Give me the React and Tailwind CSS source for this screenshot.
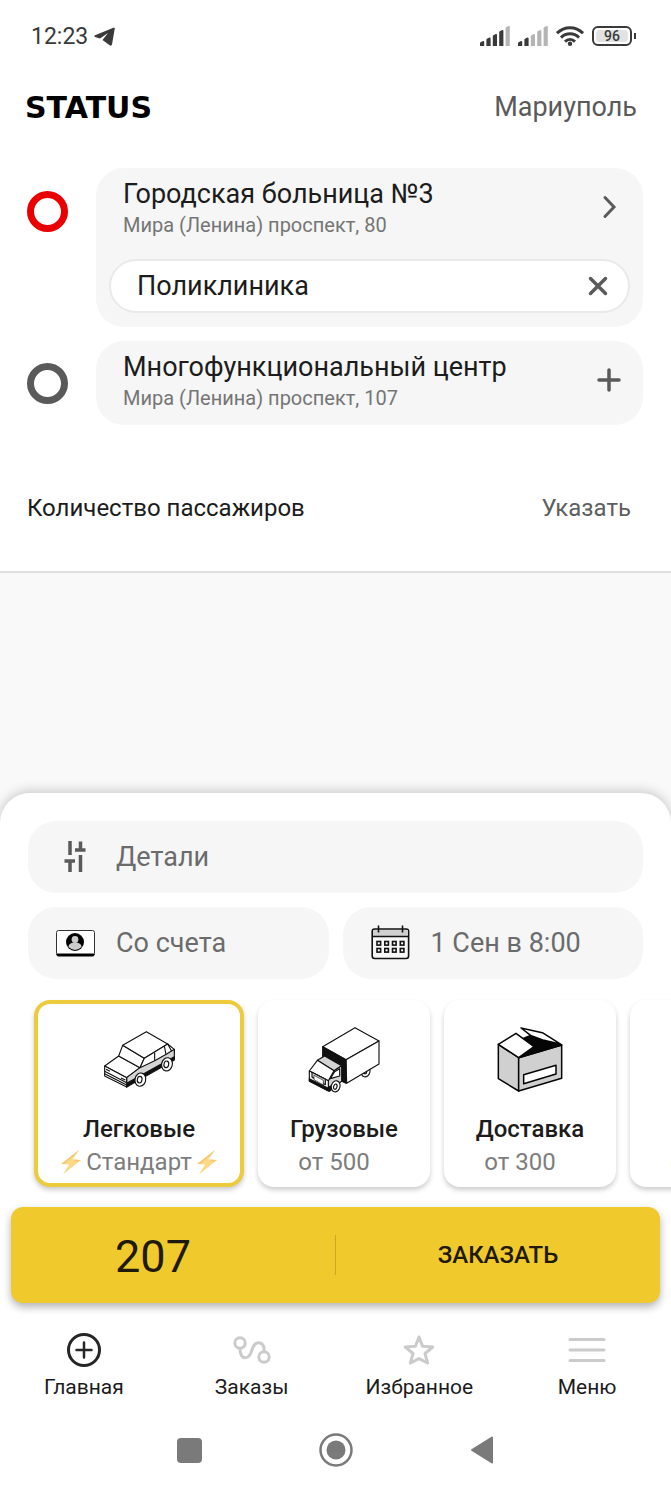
import React, { useState } from 'react';

const SignalIcon = ({ filled }) => (
    <svg width="30" height="20" viewBox="0 0 30 20">
        {[5, 8.5, 12, 16, 20].map((h, i) => (
            <path
                key={h}
                d={`M${i * 6.4} 20v-${h - 2}q0 -0.500 1 -1l2 -1q1.200 -0.300 1.200 1v${h - 1}z`}
                fill={i < filled ? '#3a3a3a' : '#b5b5b5'}
            />
        ))}
    </svg>
);

const WifiIcon = () => (
    <svg width="28" height="20" viewBox="0 0 28 20" fill="none" stroke="#3a3a3a" strokeWidth="3">
        <path d="M1 7.2C8.5 -0.2 19.5 -0.2 27 7.2" />
        <path d="M5 11.6c5.2 -5 12.8 -5 18 0" />
        <path d="M9 15.6c3 -2.8 7 -2.8 10 0" />
        <circle cx="14" cy="17.8" r="2.2" fill="#3a3a3a" stroke="none" />
    </svg>
);

const CarIcon = () => (
    <svg width="80" height="70" viewBox="237 105 240 210" stroke="#111" strokeWidth="3.4" strokeLinejoin="round">
        <path d="M254 228L296 198L360 233L320 263Z" fill="#fff" />
        <path d="M296 198L308 166L373 205L360 233Z" fill="#fff" />
        <path d="M308 166L379 125L443 162L373 205Z" fill="#fff" />
        <path d="M360 233L373 205L443 162L463 178V190L380 233Z" fill="#fff" />
        <path d="M320 263L360 233L404 212L440 192L463 178V208L350 268L320 291Z" fill="#d4d4d4" />
        <path d="M320 280L463 200V210L320 291Z" fill="#111" />
        <path d="M404 212V188M438 193L433 168M443 162L455 184" fill="none" />
        <path d="M254 228V258L320 291V263Z" fill="#fff" />
        <path d="M254 244L320 278M254 251L320 285M258 238l12 6M303 264l13 6" fill="none" />
        <ellipse cx="361" cy="269" rx="16" ry="20" transform="rotate(12 361 269)" fill="#fff" />
        <ellipse cx="359" cy="269" rx="7" ry="10" transform="rotate(12 359 269)" fill="#fff" />
        <ellipse cx="441" cy="223" rx="16" ry="20" transform="rotate(12 441 223)" fill="#fff" />
        <ellipse cx="439" cy="223" rx="7" ry="10" transform="rotate(12 439 223)" fill="#fff" />
    </svg>
);

const TruckIcon = () => (
    <svg width="80" height="70" viewBox="162 105 240 210" stroke="#111" strokeWidth="3.4" strokeLinejoin="round">
        <ellipse cx="347" cy="244" rx="13" ry="17" transform="rotate(15 347 244)" fill="#fff" />
        <ellipse cx="345" cy="244" rx="5" ry="8" fill="#fff" />
        <path d="M218 170L315 113L387 153L288 209Z" fill="#fff" />
        <path d="M288 209L387 153V222L290 280Z" fill="#fff" />
        <path d="M218 170L288 209V280L272 272V235L218 205Z" fill="#111" />
        <path d="M202 211L224 198L275 227L252 242Z" fill="#d4d4d4" />
        <path d="M252 242L275 227V274L235 302V272Z" fill="#d4d4d4" />
        <path d="M202 211L252 242L235 272L178 243Z" fill="#fff" />
        <path d="M178 243L235 272V302L178 272Z" fill="#fff" />
        <path d="M178 266L235 295V303L178 274Z" fill="#111" />
        <path d="M186 247V262L226 284V268Z" fill="#d4d4d4" />
        <path d="M192 256L220 271V285L192 269Z" fill="#fff" strokeWidth="2" />
        <path d="M241 266L254 245L269 236V258Z" fill="#fff" />
        <path d="M235 292L250 284V294L238 304Z" fill="#111" />
        <ellipse cx="257" cy="289" rx="13" ry="17" transform="rotate(15 257 289)" fill="#fff" />
        <ellipse cx="256" cy="290" rx="5" ry="8" transform="rotate(15 256 290)" fill="#fff" />
    </svg>
);

const BoxIcon = () => (
    <svg width="80" height="70" viewBox="150 105 240 210" stroke="#050505" strokeWidth="4.5" strokeLinejoin="round">
        <path d="M175 163L236 203V303L175 266Z" fill="#d0d0d0" />
        <path d="M236 203L365 165V265L236 303Z" fill="#d0d0d0" />
        <path d="M236 203L282 170L248 146L272 136L312 153L365 165Z" fill="#050505" />
        <path d="M175 163L228 130L282 170L236 203Z" fill="#fff" />
        <path d="M243 114L307 128L363 163L312 151L272 136Z" fill="#fff" />
        <path d="M251 254L348 226V252L251 281Z" fill="#fff" />
    </svg>
);

const BoltIcon = () => (
    <svg width="22" height="26" viewBox="0 0 22 26">
        <path d="M19 1L1 15L9 15.500L3 25.500L21 11L12.500 10.500Z" fill="#fbd986" />
        <path d="M19 1L1 15L5 14.500L16 5ZM12.500 10.500L21 11L17 13Z" fill="#f8c877" />
    </svg>
);

const categories = [
    { title: 'Легковые', note: 'Стандарт', icon: <CarIcon />, bolt: true },
    { title: 'Грузовые', note: 'от 500', icon: <TruckIcon /> },
    { title: 'Доставка', note: 'от 300', icon: <BoxIcon /> },
    { title: '', note: 'от 300', icon: null },
];

const tabs = [
    {
        label: 'Главная',
        icon: (
            <svg width="38" height="38" viewBox="0 0 38 38" fill="none" stroke="#262626">
                <circle cx="19" cy="19" r="15.500" strokeWidth="3" />
                <path d="M19 11.500v15M11.500 19h15" strokeWidth="2.500" strokeLinecap="round" />
            </svg>
        ),
    },
    {
        label: 'Заказы',
        icon: (
            <svg width="38" height="38" viewBox="0 0 38 38" fill="none" stroke="#cbcbcb" strokeWidth="3">
                <circle cx="7" cy="12" r="5.200" />
                <circle cx="31" cy="26" r="5.200" />
                <path d="M7 17.200c0 6 2 9.500 5.500 9.500c7.500 0 5 -15 13 -15c4 0 6 3.500 5.500 9" />
            </svg>
        ),
    },
    {
        label: 'Избранное',
        icon: (
            <svg width="38" height="38" viewBox="0 0 38 38" fill="none" stroke="#cbcbcb" strokeWidth="3" strokeLinejoin="round">
                <path d="M19 6L22.600 15.200L32.800 16L25 22.500L27.600 32L19 27.600L10.400 32L13 22.500L5.200 16L15.400 15.200Z" />
            </svg>
        ),
    },
    {
        label: 'Меню',
        icon: (
            <svg width="38" height="38" viewBox="0 0 38 38" fill="none" stroke="#cbcbcb" strokeWidth="3" strokeLinecap="round">
                <path d="M2 8.500h34M2 19h34M2 29.500h34" />
            </svg>
        ),
    },
];

const App = () => {
    const [entrance, setEntrance] = useState('Поликлиника');
    const [active, setActive] = useState(0);

    return (
        <div className="min-h-screen bg-white text-[#1c1c1c] font-['Roboto',sans-serif] flex flex-col overflow-x-hidden">
            {/* Phone status bar */}
            <div className="h-[72px] pl-[31px] pr-[35px] flex items-center justify-between text-[#3a3a3a]">
                <div className="flex items-center gap-1.5">
                    <span className="pt-0.5 text-[23px]">12:23</span>
                    <svg width="21" height="19" viewBox="0 0 21 19" fill="#3a3a3a">
                        <path d="M20 0.500L0.500 8.500Q0 9.500 1 10L6 11.500L14 6L8.500 13L16 18.500Q17.500 19 18 17.500L20.800 1.200Z" />
                    </svg>
                </div>
                <div className="flex items-center gap-2">
                    <SignalIcon filled={4} />
                    <SignalIcon filled={2} />
                    <WifiIcon />
                    <div className="flex items-center gap-0.5">
                        <span className="w-[40px] h-[20px] rounded-md border-2 border-[#3a3a3a] p-0.5 flex">
                            <span className="flex-1 rounded-sm bg-[#e2e2e2] text-[14px] leading-3 font-medium text-center">96</span>
                        </span>
                        <span className="w-0.5 h-1.5 bg-[#3a3a3a]"></span>
                    </div>
                </div>
            </div>

            <header className="h-[70px] pl-[25px] pr-[34px] flex items-center justify-between">
                <h1 className="font-['DejaVu_Sans',sans-serif] font-bold text-[30px] text-black">STATUS</h1>
                <button className="text-[27px] text-[#5a5a5a]">Мариуполь</button>
            </header>

            {/* Route */}
            <section className="pl-[27px] pr-7 pt-[26px] flex flex-col gap-3.5">
                <div className="flex items-start gap-7">
                    <span className="w-[41px] h-[41px] mt-[23px] shrink-0 rounded-full border-[7px] border-[#ea0000]"></span>
                    <div className="flex-1 rounded-[28px] bg-[#f6f6f6] pt-2.5 pb-3.5">
                        <button className="w-full flex items-center justify-between pl-[27px] pr-5 text-left">
                            <span>
                                <span className="block text-[27px] leading-8">Городская больница №3</span>
                                <span className="block text-[20px] leading-[30px] text-[#757575]">Мира (Ленина) проспект, 80</span>
                            </span>
                            <svg className="mb-1" width="28" height="28" viewBox="0 0 28 28" fill="none" stroke="#5a5a5a" strokeWidth="3" strokeLinecap="round">
                                <path d="M10 4.500L19 14L10 23.500" />
                            </svg>
                        </button>
                        <div className="mt-[19px] mx-[13px] h-[54px] rounded-full bg-white border-2 border-[#e8eaea] flex items-center pl-[26px] pr-4">
                            <input
                                aria-label="Подъезд"
                                className="flex-1 min-w-0 text-[27px] outline-none"
                                value={entrance}
                                onChange={(e) => setEntrance(e.target.value)}
                            />
                            <button aria-label="Очистить" onClick={() => setEntrance('')}>
                                <svg width="28" height="28" viewBox="0 0 28 28" fill="none" stroke="#5a5a5a" strokeWidth="3.500" strokeLinecap="round">
                                    <path d="M6.500 6.500l15 15M21.500 6.500l-15 15" />
                                </svg>
                            </button>
                        </div>
                    </div>
                </div>

                <div className="flex items-center gap-7">
                    <span className="w-[41px] h-[41px] shrink-0 rounded-full border-[7px] border-[#5a5a5a]"></span>
                    <button className="flex-1 flex items-center justify-between rounded-[28px] bg-[#f6f6f6] pt-2.5 pb-3 pl-[27px] pr-5 text-left">
                        <span>
                            <span className="block text-[27px] leading-8">Многофункциональный центр</span>
                            <span className="block text-[20px] leading-[30px] text-[#757575]">Мира (Ленина) проспект, 107</span>
                        </span>
                        <svg className="mb-1" width="28" height="28" viewBox="0 0 28 28" fill="none" stroke="#5a5a5a" strokeWidth="3.500" strokeLinecap="round">
                            <path d="M14 4v20M4 14h20" />
                        </svg>
                    </button>
                </div>
            </section>

            <div className="mt-5 h-[128px] pl-[27px] pr-10 flex items-center justify-between text-[24px] border-b-2 border-[#e0e0e0]">
                <span>Количество пассажиров</span>
                <button className="text-[#5f5f5f]">Указать</button>
            </div>

            <main className="flex-1 bg-[#f9f9f9] pt-20 flex flex-col justify-end">
                <div className="rounded-t-[30px] bg-white pt-7 pb-3 shadow-[0_-2px_12px_rgba(0,0,0,0.2)]">
                    <div className="px-7 grid grid-cols-2 gap-3.5 text-[27px] text-[#6b6b6b]">
                        <button className="col-span-2 h-[72px] rounded-[28px] bg-[#f6f6f6] pl-7 flex items-center gap-5">
                            <svg width="40" height="40" viewBox="0 0 40 40" fill="none" stroke="#5a5a5a" strokeWidth="3.500">
                                <path d="M14 4v14M24.500 4.500v9M19 13h10.500M14 35V24M8.500 24h10.500M24.500 35V18" />
                            </svg>
                            Детали
                        </button>
                        <button className="h-[72px] rounded-[28px] bg-[#f6f6f6] pl-7 flex items-center gap-5">
                            <svg width="40" height="40" viewBox="0 0 40 40">
                                <rect x="0.500" y="7.500" width="38" height="25" rx="2" fill="#fff" stroke="#333" />
                                <path d="M1 31h37v1q0 1 -1.500 1h-34q-1.500 0 -1.500 -1z" fill="#000" stroke="#000" />
                                <circle cx="19" cy="19" r="9" fill="#000" />
                                <circle cx="19" cy="16.500" r="3.400" fill="#ccc" />
                                <path d="M12.500 24q0 -4.500 6.500 -4.500t6.500 4.500q-6.500 6 -13 0z" fill="#ccc" />
                            </svg>
                            Со счета
                        </button>
                        <button className="h-[72px] rounded-[28px] bg-[#f6f6f6] pl-7 flex items-center gap-5">
                            <svg width="40" height="40" viewBox="0 0 40 40" fill="none" stroke="#111" strokeWidth="1.600">
                                <rect x="1.200" y="6" width="36.400" height="29.500" rx="2.500" />
                                <path d="M2 7h35v6h-35z" fill="#d0d0d0" stroke="none" />
                                <path d="M1.200 13.500h36.400M7.500 2.500v7M31.500 2.500v7" />
                                {[18.500, 25.500].map((y) =>
                                    [6, 13.800, 21.500, 29.300].map((x) => (
                                        <rect key={`${x}-${y}`} x={x} y={y} width="3.600" height="3.600" fill="#fff" />
                                    ))
                                )}
                            </svg>
                            1 Сен в 8:00
                        </button>
                    </div>

                    {/* Car classes */}
                    <div className="mt-[7px] pt-3.5 pb-5 pl-[34px] flex gap-3.5 overflow-hidden">
                        {categories.map((item, i) => (
                            <button
                                key={i}
                                onClick={() => setActive(i)}
                                className={`shrink-0 h-[187px] pt-[21px] rounded-2xl border-4 bg-white shadow-[0_3px_5px_rgba(0,0,0,0.2)] flex flex-col items-center text-[24px] leading-8 ${
                                    i === active ? 'w-[210px] border-[#eccb3c]' : 'w-[172px] border-transparent'
                                }`}
                            >
                                <span className="h-[70px] mb-[18px]">{item.icon}</span>
                                <span className="h-[33px] font-medium">{item.title}</span>
                                {item.bolt ? (
                                    <span className="flex items-center gap-1 text-[#7d7d7d]">
                                        <BoltIcon />
                                        {item.note}
                                        <BoltIcon />
                                    </span>
                                ) : (
                                    <span className="pr-5 text-[#7d7d7d]">{item.note}</span>
                                )}
                            </button>
                        ))}
                    </div>

                    <div className="px-[11px]">
                        <button className="w-full h-24 rounded-xl bg-[#f0ca2d] flex items-center text-[#1f1a06] shadow-[0_4px_8px_rgba(0,0,0,0.3)]">
                            <span className="w-1/2 pr-10 pt-1 text-[45px]">207</span>
                            <span className="w-px h-10 bg-[#c9a823]"></span>
                            <span className="w-1/2 text-[24px] font-medium">ЗАКАЗАТЬ</span>
                        </button>
                    </div>
                </div>
            </main>

            <nav className="relative bg-white pt-4 pb-[7px] grid grid-cols-4">
                {tabs.map((tab) => (
                    <a key={tab.label} href="#" className="flex flex-col items-center gap-1 text-[21px] leading-7">
                        {tab.icon}
                        {tab.label}
                    </a>
                ))}
            </nav>

            {/* System buttons */}
            <div className="h-[84px] flex items-center justify-center">
                <button aria-label="Недавние" className="w-[146px] flex justify-center">
                    <span className="w-[25px] h-[25px] rounded-sm bg-[#7a7a7a]"></span>
                </button>
                <button aria-label="Домой" className="w-[146px] flex justify-center">
                    <svg width="34" height="34" viewBox="0 0 34 34">
                        <circle cx="17" cy="17" r="15.500" fill="none" stroke="#7a7a7a" strokeWidth="2.500" />
                        <circle cx="17" cy="17" r="9.500" fill="#7a7a7a" />
                    </svg>
                </button>
                <button aria-label="Назад" className="w-[146px] flex justify-center">
                    <svg width="24" height="28" viewBox="0 0 24 28">
                        <path d="M22 1.500V26.500L2 14Z" fill="#7a7a7a" stroke="#7a7a7a" strokeWidth="2" strokeLinejoin="round" />
                    </svg>
                </button>
            </div>
        </div>
    );
};

export default App;
